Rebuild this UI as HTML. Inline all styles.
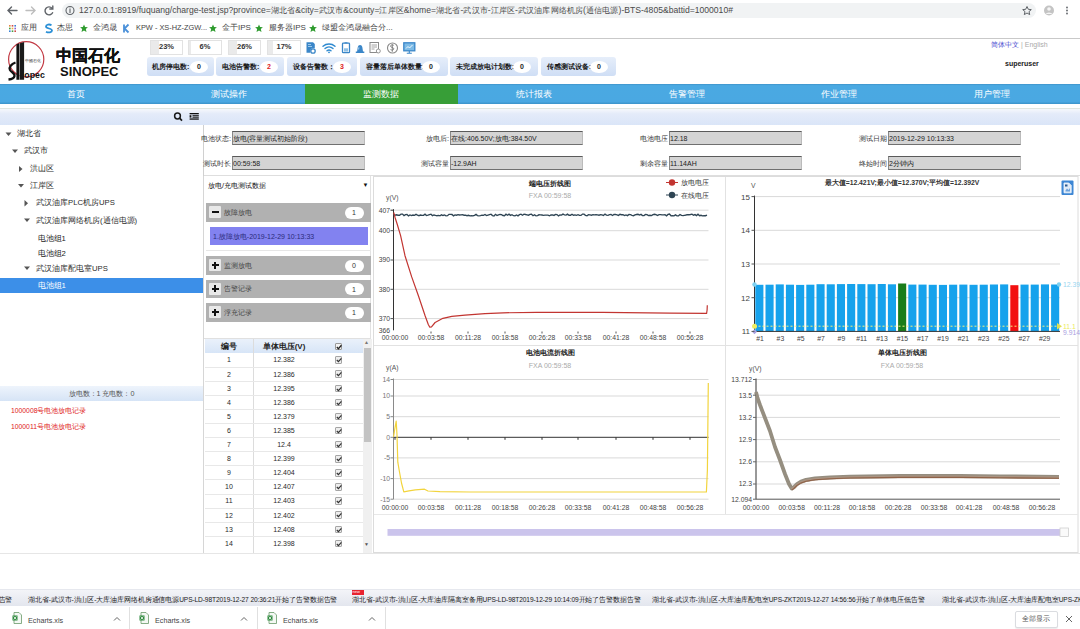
<!DOCTYPE html>
<html><head><meta charset="utf-8">
<style>
*{box-sizing:border-box;margin:0;padding:0}
html,body{width:1080px;height:629px;overflow:hidden;background:#fff;font-family:"Liberation Sans",sans-serif;color:#333}
.a{position:absolute;white-space:nowrap}
.t{position:absolute;white-space:nowrap;line-height:1}
</style></head><body>
<!-- ===== browser chrome ===== -->
<div class="a" style="left:0;top:0;width:1080px;height:38px;background:#fff"></div>
<div class="a" style="left:62px;top:3px;width:974px;height:15px;background:#f1f3f4;border-radius:8px"></div>
<div class="a" style="left:0;top:38px;width:1080px;height:1px;background:#c9c9c9"></div>
<div id="url" class="t" style="left:79px;top:6px;font-size:8.6px;color:#4a4a4a">127.0.0.1:8919/fuquang/charge-test.jsp?province=<span style="font-size:8px;letter-spacing:0.14px">湖北省</span>&amp;city=<span style="font-size:8px;letter-spacing:0.14px">武汉市</span>&amp;county=<span style="font-size:8px;letter-spacing:0.14px">江岸区</span>&amp;home=<span style="font-size:8px;letter-spacing:0.14px">湖北省</span>-<span style="font-size:8px;letter-spacing:0.14px">武汉市</span>-<span style="font-size:8px;letter-spacing:0.14px">江岸区</span>-<span style="font-size:8px;letter-spacing:0.14px">武汉油库网络机房</span>(<span style="font-size:8px;letter-spacing:0.14px">通信电源</span>)-BTS-4805&amp;battid=1000010#</div>

<!-- ===== header ===== -->
<div class="t" style="left:56px;top:48px;font-size:16px;font-weight:bold;color:#111;font-family:'Liberation Serif',serif;text-shadow:0.4px 0 0 #111,0 0.3px 0 #111">中国石化</div>
<div class="t" style="left:60px;top:64.5px;font-size:13px;font-weight:bold;color:#111">SINOPEC</div>


<!-- browser icons -->
<svg class="a" style="left:0;top:0" width="1080" height="38" viewBox="0 0 1080 38">
 <g stroke="#5f6368" stroke-width="1.4" fill="none" stroke-linecap="round">
  <path d="M8 10.5h9M11.5 7l-3.5 3.5 3.5 3.5"/>
  <path d="M26 10.5h9M31.5 7l3.5 3.5-3.5 3.5" stroke="#bdbdbd"/>
  <path d="M52 8.2a4 4 0 1 0 0.6 4.5"/><path d="M52.8 6v3h-3" />
  <circle cx="70" cy="10.5" r="4" stroke-width="1.1"/><path d="M70 9.5v3" stroke-width="1.1"/>
 </g>
 <circle cx="70" cy="8" r="0.6" fill="#5f6368"/>
 <path d="M1027 6.5l1.3 2.8 3 .3-2.3 2 .7 3-2.7-1.6-2.7 1.6.7-3-2.3-2 3-.3z" fill="none" stroke="#5f6368" stroke-width="1"/>
 <circle cx="1049" cy="10.5" r="5" fill="#c4c4c4"/><circle cx="1049" cy="9" r="1.8" fill="#f5f5f5"/><path d="M1045.5 14a4 3 0 0 1 7 0" fill="#f5f5f5"/>
 <g fill="#5f6368"><circle cx="1067" cy="7.5" r="0.9"/><circle cx="1067" cy="10.5" r="0.9"/><circle cx="1067" cy="13.5" r="0.9"/></g>
 <!-- bookmarks icons -->
 <g fill="#e8833a"><rect x="9" y="25" width="1.6" height="1.6"/><rect x="11.7" y="25" width="1.6" height="1.6" fill="#d04b4b"/><rect x="14.4" y="25" width="1.6" height="1.6" fill="#3b82d6"/>
 <rect x="9" y="27.7" width="1.6" height="1.6" fill="#46a046"/><rect x="11.7" y="27.7" width="1.6" height="1.6" fill="#e8b03a"/><rect x="14.4" y="27.7" width="1.6" height="1.6" fill="#8b5cd6"/>
 <rect x="9" y="30.4" width="1.6" height="1.6" fill="#3b82d6"/><rect x="11.7" y="30.4" width="1.6" height="1.6" fill="#46a046"/><rect x="14.4" y="30.4" width="1.6" height="1.6" fill="#d04b4b"/></g>
 <path d="M51.5 25.2c-2-1.2-5.5-.8-5.5 1.3 0 2.5 6 1.5 6 4 0 2-3.5 2.5-6 1.2" stroke="#2a8fd6" stroke-width="1.8" fill="none"/>
 <path d="M84 24.5l1.1 2.6 2.8.2-2.1 1.8.7 2.8-2.5-1.5-2.5 1.5.7-2.8-2.1-1.8 2.8-.2z" fill="#2e9b2e"/>
 <path d="M124 24.5v8M128.5 24.5l-4 4 4 4" stroke="#4a90d9" stroke-width="1.8" fill="none"/>
 <path d="M213 24.5l1.1 2.6 2.8.2-2.1 1.8.7 2.8-2.5-1.5-2.5 1.5.7-2.8-2.1-1.8 2.8-.2z" fill="#2e9b2e"/>
 <path d="M259 24.5l1.1 2.6 2.8.2-2.1 1.8.7 2.8-2.5-1.5-2.5 1.5.7-2.8-2.1-1.8 2.8-.2z" fill="#2e9b2e"/>
 <path d="M313 24.5l1.1 2.6 2.8.2-2.1 1.8.7 2.8-2.5-1.5-2.5 1.5.7-2.8-2.1-1.8 2.8-.2z" fill="#2e9b2e"/>
</svg>
<div class="t" style="left:21px;top:24px;font-size:8px;color:#444">应用</div>
<div class="t" style="left:57px;top:24px;font-size:8px;color:#444">杰思</div>
<div class="t" style="left:93px;top:24px;font-size:8px;color:#444">金鸿晟</div>
<div class="t" style="left:136px;top:24px;font-size:7.4px;color:#444">KPW - XS-HZ-ZGW...</div>
<div class="t" style="left:222px;top:24px;font-size:8px;color:#444">金干IPS</div>
<div class="t" style="left:269px;top:24px;font-size:8px;color:#444">服务器IPS</div>
<div class="t" style="left:322px;top:24px;font-size:8px;color:#444">绿盟金鸿晟融合分...</div>

<!-- logo -->
<svg class="a" style="left:0;top:38px" width="140" height="46" viewBox="0 38 140 46">
 <circle cx="26.2" cy="59.3" r="17.6" fill="none" stroke="#c23a44" stroke-width="1.2"/>
 <path d="M16.4 44.5l2.8-1.2v36.4h-2.8z" fill="#111"/>
 <path d="M19.8 43.3l4.3-1.2v37.6h-4.3z" fill="#1a1a1a"/>
 <rect x="19.2" y="44" width="0.6" height="35.7" fill="#777"/>
 <text x="24.5" y="61.5" font-size="4.2" fill="#333" font-family="Liberation Serif">中國石化</text>
 <path d="M15.5 62.5c-4 1.5-7 4.5-5.5 7.5 1.5 2.5 5 3 4.5 6-.4 2.2-3 3.2-6 3.5" stroke="#111" stroke-width="2.3" fill="none"/>
 <text x="24.3" y="78" font-size="9.5" font-weight="bold" fill="#111" font-family="Liberation Sans" textLength="20.5" lengthAdjust="spacingAndGlyphs">opec</text>
</svg>
<!-- progress boxes -->
<div class="a" style="left:150px;top:40px;width:33px;height:15px;border:1px solid #e2e2e2;background:linear-gradient(90deg,#eaeaea 0,#eaeaea 25%,#fff 25%)"></div>
<div class="a" style="left:188px;top:40px;width:34px;height:15px;border:1px solid #e2e2e2;background:linear-gradient(90deg,#eaeaea 0,#eaeaea 6%,#fff 6%)"></div>
<div class="a" style="left:228px;top:40px;width:33px;height:15px;border:1px solid #e2e2e2;background:linear-gradient(90deg,#eaeaea 0,#eaeaea 26%,#fff 26%)"></div>
<div class="a" style="left:267px;top:40px;width:34px;height:15px;border:1px solid #e2e2e2;background:linear-gradient(90deg,#eaeaea 0,#eaeaea 17%,#fff 17%)"></div>
<div class="t" style="left:150px;top:42.7px;width:33px;text-align:center;font-size:7.5px;font-weight:bold;color:#333">23%</div>
<div class="t" style="left:188px;top:42.7px;width:34px;text-align:center;font-size:7.5px;font-weight:bold;color:#333">6%</div>
<div class="t" style="left:228px;top:42.7px;width:33px;text-align:center;font-size:7.5px;font-weight:bold;color:#333">26%</div>
<div class="t" style="left:267px;top:42.7px;width:34px;text-align:center;font-size:7.5px;font-weight:bold;color:#333">17%</div>

<!-- header icons -->
<svg class="a" style="left:300px;top:38px" width="120" height="18" viewBox="300 38 120 18">
 <path d="M306.5 42.3h6.5l1.8 1.8v4.2h-1.5a3 3 0 0 0-3 3v1.4h-3.8z" fill="#3a86c8"/><rect x="308" y="44" width="3" height="1" fill="#9cc8ea"/><rect x="308" y="46" width="4" height="1" fill="#9cc8ea"/>
 <circle cx="313" cy="51" r="2.2" fill="none" stroke="#3a86c8" stroke-width="1.3"/>
 <g fill="none" stroke="#2f8ad0" stroke-width="1.4" stroke-linecap="round"><path d="M323 46.3a9 9 0 0 1 12 0"/><path d="M325 48.6a6 6 0 0 1 8 0"/><path d="M327 50.8a3 3 0 0 1 4 0"/></g><circle cx="329" cy="52.3" r="0.9" fill="#2f8ad0"/>
 <rect x="342.5" y="43.2" width="7" height="9.5" rx="0.8" fill="none" stroke="#3a86c8" stroke-width="1.3"/><rect x="344" y="48.3" width="4" height="3.3" fill="#8fc0e6"/><rect x="344.5" y="42.3" width="3" height="1" fill="#3a86c8"/>
 <path d="M355.8 53h8.5v-1.6h-1.3l-.7-4.5a2.3 2.3 0 0 0-4.5 0l-.7 4.5h-1.3z" fill="#3a86c8"/><path d="M358.6 49.5l.3-2.2" stroke="#cfe5f5" stroke-width="0.8"/>
 <rect x="370" y="42.5" width="8.5" height="10" fill="none" stroke="#8a8a8a" stroke-width="1"/><path d="M371.5 45h5.5M371.5 47h5.5M371.5 49h3" stroke="#8a8a8a" stroke-width="0.8"/><circle cx="378.3" cy="51" r="2" fill="#fff" stroke="#8a8a8a" stroke-width="0.9"/>
 <circle cx="392.5" cy="48" r="5" fill="none" stroke="#888" stroke-width="1.1"/><path d="M393.8 45.3c-1.5-.8-3.3-.3-3.3.9 0 1.4 3.3 1 3.3 2.6 0 1.3-1.9 1.6-3.3.8M392.3 44.2v7.6" stroke="#777" stroke-width="0.9" fill="none"/>
 <rect x="403.8" y="42.8" width="11" height="8" fill="#7dbbe6" stroke="#3a86c8" stroke-width="1.3"/><path d="M406 48.5l2-2 1.5 1.5 3-3" stroke="#fff" stroke-width="0.9" fill="none"/><path d="M406.8 53.3h5M409.3 51v2.3" stroke="#3a86c8" stroke-width="1.1"/>
</svg>
<!-- stat buttons -->
<div class="a" style="left:147px;top:57px;width:67px;height:19px;border-radius:3px;background:linear-gradient(#e6eefa,#cfdef5)"></div>
<div class="a" style="left:216px;top:57px;width:68px;height:19px;border-radius:3px;background:linear-gradient(#e6eefa,#cfdef5)"></div>
<div class="a" style="left:287px;top:57px;width:70px;height:19px;border-radius:3px;background:linear-gradient(#e6eefa,#cfdef5)"></div>
<div class="a" style="left:360px;top:57px;width:88px;height:19px;border-radius:3px;background:linear-gradient(#e6eefa,#cfdef5)"></div>
<div class="a" style="left:450px;top:57px;width:88px;height:19px;border-radius:3px;background:linear-gradient(#e6eefa,#cfdef5)"></div>
<div class="a" style="left:541px;top:57px;width:75px;height:19px;border-radius:3px;background:linear-gradient(#e6eefa,#cfdef5)"></div>
<div class="t" style="left:152px;top:62.5px;font-size:7px;font-weight:bold;color:#1a1a1a">机房停电数:</div>
<div class="t" style="left:222px;top:62.5px;font-size:7px;font-weight:bold;color:#1a1a1a">电池告警数:</div>
<div class="t" style="left:293px;top:62.5px;font-size:7px;font-weight:bold;color:#1a1a1a">设备告警数：</div>
<div class="t" style="left:366px;top:62.5px;font-size:7px;font-weight:bold;color:#1a1a1a">容量落后单体数量:</div>
<div class="t" style="left:456px;top:62.5px;font-size:7px;font-weight:bold;color:#1a1a1a">未完成放电计划数:</div>
<div class="t" style="left:547px;top:62.5px;font-size:7px;font-weight:bold;color:#1a1a1a">传感测试设备:</div>
<div class="a" style="left:190px;top:60.5px;width:18px;height:12.5px;border-radius:50%;background:#fff"></div>
<div class="a" style="left:260px;top:60.5px;width:18px;height:12.5px;border-radius:50%;background:#fff"></div>
<div class="a" style="left:333px;top:60.5px;width:18px;height:12.5px;border-radius:50%;background:#fff"></div>
<div class="a" style="left:422px;top:60.5px;width:18px;height:12.5px;border-radius:50%;background:#fff"></div>
<div class="a" style="left:513px;top:60.5px;width:18px;height:12.5px;border-radius:50%;background:#fff"></div>
<div class="a" style="left:590px;top:60.5px;width:18px;height:12.5px;border-radius:50%;background:#fff"></div>
<div class="t" style="left:190px;top:63px;width:18px;text-align:center;font-size:7px;font-weight:bold;color:#222">0</div>
<div class="t" style="left:260px;top:63px;width:18px;text-align:center;font-size:7px;font-weight:bold;color:#d22">2</div>
<div class="t" style="left:333px;top:63px;width:18px;text-align:center;font-size:7px;font-weight:bold;color:#d22">3</div>
<div class="t" style="left:422px;top:63px;width:18px;text-align:center;font-size:7px;font-weight:bold;color:#222">0</div>
<div class="t" style="left:513px;top:63px;width:18px;text-align:center;font-size:7px;font-weight:bold;color:#222">0</div>
<div class="t" style="left:590px;top:63px;width:18px;text-align:center;font-size:7px;font-weight:bold;color:#222">0</div>

<div class="t" style="left:991px;top:41px;font-size:7px;color:#4a4ad0">简体中文 <span style="color:#aaa">| English</span></div>
<div class="t" style="left:1005px;top:60px;font-size:7px;font-weight:bold;color:#222">superuser</div>

<!-- ===== nav ===== -->
<div class="a" style="left:0;top:84px;width:1080px;height:20px;background:linear-gradient(#3f93c9 0,#4aa9e2 8%,#4aa8e2 88%,#3b93c9 100%)"></div>
<div class="a" style="left:305px;top:84px;width:153px;height:20px;background:#379e37"></div>

<div class="t" style="left:0.0px;top:90px;width:152.6px;text-align:center;font-size:8.5px;color:#fff">首页</div>
<div class="t" style="left:152.6px;top:90px;width:152.6px;text-align:center;font-size:8.5px;color:#fff">测试操作</div>
<div class="t" style="left:305.2px;top:90px;width:152.6px;text-align:center;font-size:8.5px;color:#fff">监测数据</div>
<div class="t" style="left:457.8px;top:90px;width:152.6px;text-align:center;font-size:8.5px;color:#fff">统计报表</div>
<div class="t" style="left:610.4px;top:90px;width:152.6px;text-align:center;font-size:8.5px;color:#fff">告警管理</div>
<div class="t" style="left:763.0px;top:90px;width:152.6px;text-align:center;font-size:8.5px;color:#fff">作业管理</div>
<div class="t" style="left:915.6px;top:90px;width:152.6px;text-align:center;font-size:8.5px;color:#fff">用户管理</div>

<!-- toolbar strip -->
<div class="a" style="left:0;top:108px;width:1080px;height:17px;background:linear-gradient(#f6f8fc 0,#e4ebf9 30%,#dae5f8 100%);border-top:1px solid #e0e6e0"></div>

<!-- left panel -->
<div class="a" style="left:203px;top:125px;width:1px;height:428px;background:#d0d0d0"></div>
<div class="a" style="left:0;top:553px;width:1080px;height:1px;background:#e6e6e6"></div>


<!-- toolbar icons -->
<svg class="a" style="left:170px;top:108px" width="34" height="17" viewBox="170 108 34 17">
 <circle cx="177.5" cy="116" r="2.9" fill="none" stroke="#1a1a1a" stroke-width="1.5"/><path d="M179.6 118.2l2.4 2.4" stroke="#1a1a1a" stroke-width="1.7"/>
 <rect x="189.6" y="113" width="9.2" height="1.3" fill="#111"/><rect x="189.6" y="118.4" width="9.2" height="1.3" fill="#111"/>
 <rect x="189.6" y="115.2" width="1.8" height="2.4" fill="#111"/><rect x="192.5" y="115.2" width="6.3" height="1" fill="#111"/><rect x="192.5" y="116.7" width="6.3" height="1" fill="#111"/>
</svg>
<!-- tree -->
<svg class="a" style="left:0;top:125px" width="40" height="170" viewBox="0 125 40 170">
 <g fill="#555">
  <path d="M5.5 132.5h6l-3 3.5z"/>
  <path d="M12 149.5h6l-3 3.5z"/>
  <path d="M19 166v6l3.5-3z"/>
  <path d="M18 184h6l-3 3.5z"/>
  <path d="M24.5 200v6.5l3.5-3.2z"/>
  <path d="M24 218.5h6l-3 3.5z"/>
  <path d="M24 266.5h6l-3 3.5z"/>
 </g>
</svg>
<div class="t" style="left:17px;top:130px;font-size:7.7px;color:#2a2a2a">湖北省</div>
<div class="t" style="left:24px;top:147px;font-size:7.7px;color:#2a2a2a">武汉市</div>
<div class="t" style="left:30px;top:165px;font-size:7.7px;color:#2a2a2a">洪山区</div>
<div class="t" style="left:30px;top:182px;font-size:7.7px;color:#2a2a2a">江岸区</div>
<div class="t" style="left:36px;top:199px;font-size:7.7px;color:#2a2a2a">武汉油库PLC机房UPS</div>
<div class="t" style="left:36px;top:217px;font-size:7.7px;color:#2a2a2a">武汉油库网络机房(通信电源)</div>
<div class="t" style="left:37.5px;top:235px;font-size:7.7px;color:#222">电池组1</div>
<div class="t" style="left:37.5px;top:250px;font-size:7.7px;color:#222">电池组2</div>
<div class="t" style="left:36px;top:265px;font-size:7.7px;color:#2a2a2a">武汉油库配电室UPS</div>
<div class="a" style="left:0;top:278px;width:203px;height:15px;background:#3c8fe8"></div>
<div class="t" style="left:37.5px;top:282px;font-size:7.7px;color:#fff">电池组1</div>

<div class="a" style="left:0;top:386px;width:203px;height:15px;background:linear-gradient(#eef4fc,#d6e4f6)"></div>
<div class="t" style="left:0;top:390px;width:203px;text-align:center;font-size:7.2px;color:#555">放电数：1 充电数：0</div>
<div class="t" style="left:11px;top:407.5px;font-size:6.8px;color:#e02020">1000008号电池放电记录</div>
<div class="t" style="left:11px;top:423.5px;font-size:6.8px;color:#e02020">1000011号电池放电记录</div>

<!-- right content -->
<div class="a" style="left:204px;top:175px;width:876px;height:1px;background:#dedede"></div>

<!-- info fields -->
<div class="a" style="left:232px;top:131px;width:133px;height:14px;background:#d4d4d4;border-top:1.5px solid #5a5a5a;border-bottom:1.5px solid #707070;border-left:1px solid #888;border-right:1px solid #bbb"></div>
<div class="t" style="left:233px;top:134.5px;font-size:7px;color:#222">放电(容量测试初始阶段)</div>
<div class="t" style="left:152px;top:134.5px;width:79px;text-align:right;font-size:7.3px;color:#333">电池状态:</div>
<div class="a" style="left:450px;top:131px;width:133px;height:14px;background:#d4d4d4;border-top:1.5px solid #5a5a5a;border-bottom:1.5px solid #707070;border-left:1px solid #888;border-right:1px solid #bbb"></div>
<div class="t" style="left:451px;top:134.5px;font-size:7px;color:#222">在线:406.50V;放电:384.50V</div>
<div class="t" style="left:370px;top:134.5px;width:79px;text-align:right;font-size:7.3px;color:#333">放电后:</div>
<div class="a" style="left:669px;top:131px;width:133px;height:14px;background:#d4d4d4;border-top:1.5px solid #5a5a5a;border-bottom:1.5px solid #707070;border-left:1px solid #888;border-right:1px solid #bbb"></div>
<div class="t" style="left:670px;top:134.5px;font-size:7px;color:#222">12.18</div>
<div class="t" style="left:589px;top:134.5px;width:79px;text-align:right;font-size:7.3px;color:#333">电池电压</div>
<div class="a" style="left:888px;top:131px;width:133px;height:14px;background:#d4d4d4;border-top:1.5px solid #5a5a5a;border-bottom:1.5px solid #707070;border-left:1px solid #888;border-right:1px solid #bbb"></div>
<div class="t" style="left:889px;top:134.5px;font-size:7px;color:#222">2019-12-29 10:13:33</div>
<div class="t" style="left:808px;top:134.5px;width:79px;text-align:right;font-size:7.3px;color:#333">测试日期</div>
<div class="a" style="left:232px;top:156px;width:133px;height:14px;background:#d4d4d4;border-top:1.5px solid #5a5a5a;border-bottom:1.5px solid #707070;border-left:1px solid #888;border-right:1px solid #bbb"></div>
<div class="t" style="left:233px;top:159.5px;font-size:7px;color:#222">00:59:58</div>
<div class="t" style="left:152px;top:159.5px;width:79px;text-align:right;font-size:7.3px;color:#333">测试时长</div>
<div class="a" style="left:450px;top:156px;width:133px;height:14px;background:#d4d4d4;border-top:1.5px solid #5a5a5a;border-bottom:1.5px solid #707070;border-left:1px solid #888;border-right:1px solid #bbb"></div>
<div class="t" style="left:451px;top:159.5px;font-size:7px;color:#222">-12.9AH</div>
<div class="t" style="left:370px;top:159.5px;width:79px;text-align:right;font-size:7.3px;color:#333">测试容量</div>
<div class="a" style="left:669px;top:156px;width:133px;height:14px;background:#d4d4d4;border-top:1.5px solid #5a5a5a;border-bottom:1.5px solid #707070;border-left:1px solid #888;border-right:1px solid #bbb"></div>
<div class="t" style="left:670px;top:159.5px;font-size:7px;color:#222">11.14AH</div>
<div class="t" style="left:589px;top:159.5px;width:79px;text-align:right;font-size:7.3px;color:#333">剩余容量</div>
<div class="a" style="left:888px;top:156px;width:133px;height:14px;background:#d4d4d4;border-top:1.5px solid #5a5a5a;border-bottom:1.5px solid #707070;border-left:1px solid #888;border-right:1px solid #bbb"></div>
<div class="t" style="left:889px;top:159.5px;font-size:7px;color:#222">2分钟内</div>
<div class="t" style="left:808px;top:159.5px;width:79px;text-align:right;font-size:7.3px;color:#333">终始时间</div>

<!-- select panel -->
<div class="a" style="left:203px;top:176px;width:1px;height:377px;background:#d6d6d6"></div>
<div class="a" style="left:370px;top:176px;width:1px;height:163px;background:#e2e2e2"></div>
<div class="t" style="left:208px;top:181.5px;font-size:7.2px;color:#111">放电/充电测试数据</div>
<div class="t" style="left:362.5px;top:182px;font-size:6px;color:#111">▼</div>
<div class="a" style="left:206px;top:203px;width:164.6px;height:18.5px;background:#b1b1b1"></div>
<div class="a" style="left:209px;top:206px;width:12px;height:12px;background:#e8e8e8;border-radius:1px"></div>
<div class="a" style="left:211.5px;top:211.3px;width:7px;height:1.6px;background:#111"></div>
<div class="t" style="left:224px;top:208.5px;font-size:7px;color:#444">故障放电</div>
<div class="a" style="left:344.5px;top:206.5px;width:19px;height:12px;border-radius:6px;background:#fff"></div>
<div class="t" style="left:344.5px;top:209px;width:19px;text-align:center;font-size:7px;color:#333">1</div>
<div class="a" style="left:206px;top:250px;width:164.6px;height:1px;background:#e6e6e6"></div>
<div class="a" style="left:209.5px;top:227px;width:158px;height:18px;background:#8282f0"></div>
<div class="t" style="left:213px;top:232.5px;font-size:7px;color:#2b2b7a">1.故障放电-2019-12-29 10:13:33</div>
<div class="a" style="left:206px;top:256px;width:164.6px;height:18.5px;background:#b1b1b1"></div>
<div class="a" style="left:209px;top:259px;width:12px;height:12px;background:#e8e8e8;border-radius:1px"></div>
<div class="a" style="left:211.5px;top:264.3px;width:7px;height:1.8px;background:#111"></div>
<div class="a" style="left:214.1px;top:261.7px;width:1.8px;height:7px;background:#111"></div>
<div class="t" style="left:224px;top:261.5px;font-size:7px;color:#444">监测放电</div>
<div class="a" style="left:344.5px;top:259.5px;width:19px;height:12px;border-radius:6px;background:#fff"></div>
<div class="t" style="left:344.5px;top:262px;width:19px;text-align:center;font-size:7px;color:#333">0</div>
<div class="a" style="left:206px;top:279.5px;width:164.6px;height:18.5px;background:#b1b1b1"></div>
<div class="a" style="left:209px;top:282.5px;width:12px;height:12px;background:#e8e8e8;border-radius:1px"></div>
<div class="a" style="left:211.5px;top:287.8px;width:7px;height:1.8px;background:#111"></div>
<div class="a" style="left:214.1px;top:285.2px;width:1.8px;height:7px;background:#111"></div>
<div class="t" style="left:224px;top:285.0px;font-size:7px;color:#444">告警记录</div>
<div class="a" style="left:344.5px;top:283.0px;width:19px;height:12px;border-radius:6px;background:#fff"></div>
<div class="t" style="left:344.5px;top:285.5px;width:19px;text-align:center;font-size:7px;color:#333">1</div>
<div class="a" style="left:206px;top:303px;width:164.6px;height:18.5px;background:#b1b1b1"></div>
<div class="a" style="left:209px;top:306px;width:12px;height:12px;background:#e8e8e8;border-radius:1px"></div>
<div class="a" style="left:211.5px;top:311.3px;width:7px;height:1.8px;background:#111"></div>
<div class="a" style="left:214.1px;top:308.7px;width:1.8px;height:7px;background:#111"></div>
<div class="t" style="left:224px;top:308.5px;font-size:7px;color:#444">浮充记录</div>
<div class="a" style="left:344.5px;top:306.5px;width:19px;height:12px;border-radius:6px;background:#fff"></div>
<div class="t" style="left:344.5px;top:309px;width:19px;text-align:center;font-size:7px;color:#333">1</div>
<div class="a" style="left:204px;top:338px;width:167px;height:1px;background:#e0e0e0"></div>
<div class="a" style="left:205px;top:338.5px;width:158px;height:14.5px;background:linear-gradient(#eaf1fb,#d7e5f7)"></div>
<div class="t" style="left:205px;top:342.5px;width:48px;text-align:center;font-size:8px;font-weight:bold;color:#222">编号</div>
<div class="t" style="left:253px;top:342.5px;width:62px;text-align:center;font-size:8px;font-weight:bold;color:#222">单体电压(V)</div>
<div class="a" style="left:253px;top:339px;width:1px;height:214px;background:#dcdcdc"></div>
<div class="a" style="left:362.5px;top:339px;width:9px;height:214px;background:#f0f0f0"></div>
<div class="a" style="left:363.5px;top:347.5px;width:7px;height:94px;background:#c3c3c3"></div>
<div class="t" style="left:364px;top:340px;font-size:5px;color:#777">▲</div>
<div class="t" style="left:364px;top:542px;font-size:5px;color:#555">▼</div>
<div class="a" style="left:205px;top:366.60px;width:158px;height:1px;background:#e8e8e8"></div>
<div class="t" style="left:205px;top:356.45px;width:48px;text-align:center;font-size:7px;color:#2a2a2a">1</div>
<div class="t" style="left:253px;top:356.45px;width:62px;text-align:center;font-size:7px;color:#2a2a2a">12.382</div>
<div class="a" style="left:334.5px;top:356.30px;width:7.5px;height:7.5px;border:1px solid #a5a5a5;background:#eee;border-radius:1px"></div>
<svg class="a" style="left:334.5px;top:356.30px" width="8" height="8" viewBox="0 0 8 8"><path d="M1.8 4l1.6 1.7 3-3.4" stroke="#333" stroke-width="1.2" fill="none"/></svg>
<div class="a" style="left:205px;top:380.70px;width:158px;height:1px;background:#e8e8e8"></div>
<div class="t" style="left:205px;top:370.55px;width:48px;text-align:center;font-size:7px;color:#2a2a2a">2</div>
<div class="t" style="left:253px;top:370.55px;width:62px;text-align:center;font-size:7px;color:#2a2a2a">12.386</div>
<div class="a" style="left:334.5px;top:370.40px;width:7.5px;height:7.5px;border:1px solid #a5a5a5;background:#eee;border-radius:1px"></div>
<svg class="a" style="left:334.5px;top:370.40px" width="8" height="8" viewBox="0 0 8 8"><path d="M1.8 4l1.6 1.7 3-3.4" stroke="#333" stroke-width="1.2" fill="none"/></svg>
<div class="a" style="left:205px;top:394.80px;width:158px;height:1px;background:#e8e8e8"></div>
<div class="t" style="left:205px;top:384.65px;width:48px;text-align:center;font-size:7px;color:#2a2a2a">3</div>
<div class="t" style="left:253px;top:384.65px;width:62px;text-align:center;font-size:7px;color:#2a2a2a">12.395</div>
<div class="a" style="left:334.5px;top:384.50px;width:7.5px;height:7.5px;border:1px solid #a5a5a5;background:#eee;border-radius:1px"></div>
<svg class="a" style="left:334.5px;top:384.50px" width="8" height="8" viewBox="0 0 8 8"><path d="M1.8 4l1.6 1.7 3-3.4" stroke="#333" stroke-width="1.2" fill="none"/></svg>
<div class="a" style="left:205px;top:408.90px;width:158px;height:1px;background:#e8e8e8"></div>
<div class="t" style="left:205px;top:398.75px;width:48px;text-align:center;font-size:7px;color:#2a2a2a">4</div>
<div class="t" style="left:253px;top:398.75px;width:62px;text-align:center;font-size:7px;color:#2a2a2a">12.386</div>
<div class="a" style="left:334.5px;top:398.60px;width:7.5px;height:7.5px;border:1px solid #a5a5a5;background:#eee;border-radius:1px"></div>
<svg class="a" style="left:334.5px;top:398.60px" width="8" height="8" viewBox="0 0 8 8"><path d="M1.8 4l1.6 1.7 3-3.4" stroke="#333" stroke-width="1.2" fill="none"/></svg>
<div class="a" style="left:205px;top:423.00px;width:158px;height:1px;background:#e8e8e8"></div>
<div class="t" style="left:205px;top:412.85px;width:48px;text-align:center;font-size:7px;color:#2a2a2a">5</div>
<div class="t" style="left:253px;top:412.85px;width:62px;text-align:center;font-size:7px;color:#2a2a2a">12.379</div>
<div class="a" style="left:334.5px;top:412.70px;width:7.5px;height:7.5px;border:1px solid #a5a5a5;background:#eee;border-radius:1px"></div>
<svg class="a" style="left:334.5px;top:412.70px" width="8" height="8" viewBox="0 0 8 8"><path d="M1.8 4l1.6 1.7 3-3.4" stroke="#333" stroke-width="1.2" fill="none"/></svg>
<div class="a" style="left:205px;top:437.10px;width:158px;height:1px;background:#e8e8e8"></div>
<div class="t" style="left:205px;top:426.95px;width:48px;text-align:center;font-size:7px;color:#2a2a2a">6</div>
<div class="t" style="left:253px;top:426.95px;width:62px;text-align:center;font-size:7px;color:#2a2a2a">12.385</div>
<div class="a" style="left:334.5px;top:426.80px;width:7.5px;height:7.5px;border:1px solid #a5a5a5;background:#eee;border-radius:1px"></div>
<svg class="a" style="left:334.5px;top:426.80px" width="8" height="8" viewBox="0 0 8 8"><path d="M1.8 4l1.6 1.7 3-3.4" stroke="#333" stroke-width="1.2" fill="none"/></svg>
<div class="a" style="left:205px;top:451.20px;width:158px;height:1px;background:#e8e8e8"></div>
<div class="t" style="left:205px;top:441.05px;width:48px;text-align:center;font-size:7px;color:#2a2a2a">7</div>
<div class="t" style="left:253px;top:441.05px;width:62px;text-align:center;font-size:7px;color:#2a2a2a">12.4</div>
<div class="a" style="left:334.5px;top:440.90px;width:7.5px;height:7.5px;border:1px solid #a5a5a5;background:#eee;border-radius:1px"></div>
<svg class="a" style="left:334.5px;top:440.90px" width="8" height="8" viewBox="0 0 8 8"><path d="M1.8 4l1.6 1.7 3-3.4" stroke="#333" stroke-width="1.2" fill="none"/></svg>
<div class="a" style="left:205px;top:465.30px;width:158px;height:1px;background:#e8e8e8"></div>
<div class="t" style="left:205px;top:455.15px;width:48px;text-align:center;font-size:7px;color:#2a2a2a">8</div>
<div class="t" style="left:253px;top:455.15px;width:62px;text-align:center;font-size:7px;color:#2a2a2a">12.399</div>
<div class="a" style="left:334.5px;top:455.00px;width:7.5px;height:7.5px;border:1px solid #a5a5a5;background:#eee;border-radius:1px"></div>
<svg class="a" style="left:334.5px;top:455.00px" width="8" height="8" viewBox="0 0 8 8"><path d="M1.8 4l1.6 1.7 3-3.4" stroke="#333" stroke-width="1.2" fill="none"/></svg>
<div class="a" style="left:205px;top:479.40px;width:158px;height:1px;background:#e8e8e8"></div>
<div class="t" style="left:205px;top:469.25px;width:48px;text-align:center;font-size:7px;color:#2a2a2a">9</div>
<div class="t" style="left:253px;top:469.25px;width:62px;text-align:center;font-size:7px;color:#2a2a2a">12.404</div>
<div class="a" style="left:334.5px;top:469.10px;width:7.5px;height:7.5px;border:1px solid #a5a5a5;background:#eee;border-radius:1px"></div>
<svg class="a" style="left:334.5px;top:469.10px" width="8" height="8" viewBox="0 0 8 8"><path d="M1.8 4l1.6 1.7 3-3.4" stroke="#333" stroke-width="1.2" fill="none"/></svg>
<div class="a" style="left:205px;top:493.50px;width:158px;height:1px;background:#e8e8e8"></div>
<div class="t" style="left:205px;top:483.35px;width:48px;text-align:center;font-size:7px;color:#2a2a2a">10</div>
<div class="t" style="left:253px;top:483.35px;width:62px;text-align:center;font-size:7px;color:#2a2a2a">12.407</div>
<div class="a" style="left:334.5px;top:483.20px;width:7.5px;height:7.5px;border:1px solid #a5a5a5;background:#eee;border-radius:1px"></div>
<svg class="a" style="left:334.5px;top:483.20px" width="8" height="8" viewBox="0 0 8 8"><path d="M1.8 4l1.6 1.7 3-3.4" stroke="#333" stroke-width="1.2" fill="none"/></svg>
<div class="a" style="left:205px;top:507.60px;width:158px;height:1px;background:#e8e8e8"></div>
<div class="t" style="left:205px;top:497.45px;width:48px;text-align:center;font-size:7px;color:#2a2a2a">11</div>
<div class="t" style="left:253px;top:497.45px;width:62px;text-align:center;font-size:7px;color:#2a2a2a">12.403</div>
<div class="a" style="left:334.5px;top:497.30px;width:7.5px;height:7.5px;border:1px solid #a5a5a5;background:#eee;border-radius:1px"></div>
<svg class="a" style="left:334.5px;top:497.30px" width="8" height="8" viewBox="0 0 8 8"><path d="M1.8 4l1.6 1.7 3-3.4" stroke="#333" stroke-width="1.2" fill="none"/></svg>
<div class="a" style="left:205px;top:521.70px;width:158px;height:1px;background:#e8e8e8"></div>
<div class="t" style="left:205px;top:511.55px;width:48px;text-align:center;font-size:7px;color:#2a2a2a">12</div>
<div class="t" style="left:253px;top:511.55px;width:62px;text-align:center;font-size:7px;color:#2a2a2a">12.402</div>
<div class="a" style="left:334.5px;top:511.40px;width:7.5px;height:7.5px;border:1px solid #a5a5a5;background:#eee;border-radius:1px"></div>
<svg class="a" style="left:334.5px;top:511.40px" width="8" height="8" viewBox="0 0 8 8"><path d="M1.8 4l1.6 1.7 3-3.4" stroke="#333" stroke-width="1.2" fill="none"/></svg>
<div class="a" style="left:205px;top:535.80px;width:158px;height:1px;background:#e8e8e8"></div>
<div class="t" style="left:205px;top:525.65px;width:48px;text-align:center;font-size:7px;color:#2a2a2a">13</div>
<div class="t" style="left:253px;top:525.65px;width:62px;text-align:center;font-size:7px;color:#2a2a2a">12.408</div>
<div class="a" style="left:334.5px;top:525.50px;width:7.5px;height:7.5px;border:1px solid #a5a5a5;background:#eee;border-radius:1px"></div>
<svg class="a" style="left:334.5px;top:525.50px" width="8" height="8" viewBox="0 0 8 8"><path d="M1.8 4l1.6 1.7 3-3.4" stroke="#333" stroke-width="1.2" fill="none"/></svg>
<div class="t" style="left:205px;top:539.75px;width:48px;text-align:center;font-size:7px;color:#2a2a2a">14</div>
<div class="t" style="left:253px;top:539.75px;width:62px;text-align:center;font-size:7px;color:#2a2a2a">12.398</div>
<div class="a" style="left:334.5px;top:539.60px;width:7.5px;height:7.5px;border:1px solid #a5a5a5;background:#eee;border-radius:1px"></div>
<svg class="a" style="left:334.5px;top:539.60px" width="8" height="8" viewBox="0 0 8 8"><path d="M1.8 4l1.6 1.7 3-3.4" stroke="#333" stroke-width="1.2" fill="none"/></svg>
<div class="a" style="left:334.5px;top:342.5px;width:7.5px;height:7.5px;border:1px solid #9a9a9a;background:#f4f4f4;border-radius:1px"></div>
<svg class="a" style="left:334.5px;top:342.5px" width="8" height="8" viewBox="0 0 8 8"><path d="M1.8 4l1.6 1.7 3-3.4" stroke="#222" stroke-width="1.3" fill="none"/></svg>

<svg class="a" style="left:0;top:0" width="1080" height="629" viewBox="0 0 1080 629" font-family="Liberation Sans">
<rect x="373.5" y="176.5" width="704.5" height="376" fill="none" stroke="#dcdcdc" stroke-width="1"/>
<line x1="725.5" y1="177" x2="725.5" y2="515" stroke="#e2e2e2"/>
<line x1="374" y1="345.5" x2="1078" y2="345.5" stroke="#e2e2e2"/>
<line x1="374" y1="514.5" x2="1078" y2="514.5" stroke="#e8e8e8"/>
<text x="550" y="185.5" font-size="7" fill="#222" text-anchor="middle" font-weight="bold">端电压折线图</text>
<text x="550" y="198" font-size="7" fill="#aaa" text-anchor="middle">FXA 00:59:58</text>
<text x="386" y="200" font-size="6.8" fill="#555">y(V)</text>
<line x1="666" y1="182.5" x2="678" y2="182.5" stroke="#c23531" stroke-width="1"/><circle cx="672" cy="182.5" r="3.2" fill="#c23531"/>
<text x="681" y="185" font-size="7" fill="#333">放电电压</text>
<line x1="666" y1="195" x2="678" y2="195" stroke="#2f4554" stroke-width="1"/><circle cx="672" cy="195" r="3.2" fill="#2f4554"/>
<text x="681" y="197.5" font-size="7" fill="#333">在线电压</text>
<line x1="393.5" y1="210.2" x2="708.5" y2="210.2" stroke="#d9d9d9" stroke-width="1"/>
<text x="390" y="212.5" font-size="6.8" fill="#444" text-anchor="end">407</text>
<line x1="393.5" y1="230.7" x2="708.5" y2="230.7" stroke="#d9d9d9" stroke-width="1"/>
<text x="390" y="233.0" font-size="6.8" fill="#444" text-anchor="end">400</text>
<line x1="393.5" y1="260.0" x2="708.5" y2="260.0" stroke="#d9d9d9" stroke-width="1"/>
<text x="390" y="262.3" font-size="6.8" fill="#444" text-anchor="end">390</text>
<line x1="393.5" y1="289.3" x2="708.5" y2="289.3" stroke="#d9d9d9" stroke-width="1"/>
<text x="390" y="291.6" font-size="6.8" fill="#444" text-anchor="end">380</text>
<line x1="393.5" y1="318.6" x2="708.5" y2="318.6" stroke="#d9d9d9" stroke-width="1"/>
<text x="390" y="320.9" font-size="6.8" fill="#444" text-anchor="end">370</text>
<text x="390" y="332.6" font-size="6.8" fill="#444" text-anchor="end">366</text>
<line x1="393.5" y1="209.2" x2="393.5" y2="330.3" stroke="#333" stroke-width="1"/>
<line x1="390.5" y1="210.2" x2="393.5" y2="210.2" stroke="#333" stroke-width="1"/>
<line x1="431" y1="331.5" x2="431" y2="333.5" stroke="#555"/><line x1="468" y1="331.5" x2="468" y2="333.5" stroke="#555"/><line x1="505" y1="331.5" x2="505" y2="333.5" stroke="#555"/><line x1="542" y1="331.5" x2="542" y2="333.5" stroke="#555"/><line x1="578" y1="331.5" x2="578" y2="333.5" stroke="#555"/><line x1="616" y1="331.5" x2="616" y2="333.5" stroke="#555"/><line x1="653" y1="331.5" x2="653" y2="333.5" stroke="#555"/><line x1="690" y1="331.5" x2="690" y2="333.5" stroke="#555"/><text x="395" y="339.5" font-size="6.8" fill="#444" text-anchor="middle">00:00:00</text>
<text x="431" y="339.5" font-size="6.8" fill="#444" text-anchor="middle">00:03:58</text>
<text x="468" y="339.5" font-size="6.8" fill="#444" text-anchor="middle">00:11:28</text>
<text x="505" y="339.5" font-size="6.8" fill="#444" text-anchor="middle">00:18:58</text>
<text x="542" y="339.5" font-size="6.8" fill="#444" text-anchor="middle">00:26:28</text>
<text x="578" y="339.5" font-size="6.8" fill="#444" text-anchor="middle">00:33:58</text>
<text x="616" y="339.5" font-size="6.8" fill="#444" text-anchor="middle">00:41:28</text>
<text x="653" y="339.5" font-size="6.8" fill="#444" text-anchor="middle">00:48:58</text>
<text x="690" y="339.5" font-size="6.8" fill="#444" text-anchor="middle">00:56:28</text>
<polyline points="393.5,214.5 395.0,215.1 396.5,214.8 398.0,215.2 399.5,215.2 401.0,214.2 402.5,214.1 404.0,215.6 405.5,214.6 407.0,214.5 408.5,215.9 410.0,214.9 411.5,215.6 413.0,215.0 414.5,215.3 416.0,214.4 417.5,215.2 419.0,215.7 420.5,215.0 422.0,215.4 423.5,215.3 425.0,214.2 426.5,215.5 428.0,215.2 429.5,214.6 431.0,214.2 432.5,215.7 434.0,215.0 435.5,215.4 437.0,215.7 438.5,215.4 440.0,215.8 441.5,214.8 443.0,215.5 444.5,214.9 446.0,215.8 447.5,215.7 449.0,214.3 450.5,214.3 452.0,214.5 453.5,215.8 455.0,214.9 456.5,215.2 458.0,214.6 459.5,215.0 461.0,214.8 462.5,214.7 464.0,215.2 465.5,215.2 467.0,215.7 468.5,215.3 470.0,215.8 471.5,215.6 473.0,215.9 474.5,215.3 476.0,214.4 477.5,215.6 479.0,215.8 480.5,215.7 482.0,215.1 483.5,215.4 485.0,214.5 486.5,215.6 488.0,215.1 489.5,214.6 491.0,214.2 492.5,215.6 494.0,215.9 495.5,214.3 497.0,215.5 498.5,214.8 500.0,214.4 501.5,214.6 503.0,215.5 504.5,215.7 506.0,214.2 507.5,215.2 509.0,214.2 510.5,215.4 512.0,214.7 513.5,215.7 515.0,215.9 516.5,215.0 518.0,215.9 519.5,214.7 521.0,214.2 522.5,215.2 524.0,214.2 525.5,214.5 527.0,214.8 528.5,215.2 530.0,214.4 531.5,214.2 533.0,215.7 534.5,214.7 536.0,215.8 537.5,215.7 539.0,214.8 540.5,214.9 542.0,215.0 543.5,215.3 545.0,215.2 546.5,215.1 548.0,215.2 549.5,215.8 551.0,215.0 552.5,214.9 554.0,215.4 555.5,214.5 557.0,214.6 558.5,215.9 560.0,215.0 561.5,215.1 563.0,214.1 564.5,214.8 566.0,215.1 567.5,214.1 569.0,215.2 570.5,215.2 572.0,214.2 573.5,215.2 575.0,214.9 576.5,215.3 578.0,214.7 579.5,215.4 581.0,215.4 582.5,214.1 584.0,214.2 585.5,215.3 587.0,215.8 588.5,214.6 590.0,214.9 591.5,215.2 593.0,214.7 594.5,214.8 596.0,214.7 597.5,214.8 599.0,215.2 600.5,214.6 602.0,214.8 603.5,215.5 605.0,214.1 606.5,215.1 608.0,215.4 609.5,214.7 611.0,214.5 612.5,215.5 614.0,214.5 615.5,214.4 617.0,214.9 618.5,215.4 620.0,214.3 621.5,214.7 623.0,214.7 624.5,215.6 626.0,214.9 627.5,215.6 629.0,214.4 630.5,214.7 632.0,215.3 633.5,215.7 635.0,214.9 636.5,214.5 638.0,214.3 639.5,215.1 641.0,214.4 642.5,215.6 644.0,215.6 645.5,214.4 647.0,214.6 648.5,215.6 650.0,215.3 651.5,215.6 653.0,214.7 654.5,214.3 656.0,214.6 657.5,215.5 659.0,214.6 660.5,214.7 662.0,214.9 663.5,214.9 665.0,214.8 666.5,215.8 668.0,214.4 669.5,214.1 671.0,215.8 672.5,215.7 674.0,215.9 675.5,214.9 677.0,215.8 678.5,215.8 680.0,214.5 681.5,215.4 683.0,215.6 684.5,215.3 686.0,215.0 687.5,214.6 689.0,214.7 690.5,214.5 692.0,214.2 693.5,215.2 695.0,214.6 696.5,215.6 698.0,214.2 699.5,215.7 701.0,215.3 702.5,215.8 704.0,215.7 705.5,215.7 707.0,215.1" fill="none" stroke="#2f4554" stroke-width="1.35"/>
<polyline points="393.7,212.5 395.2,218 397.3,224.5 400.6,235.6 405,255.7 411.7,276.9 418.4,295.8 425.1,315.8 428.3,324.5 429.8,327.2 431.5,326.8 435.1,322.5 442.9,318.3 451.8,316.3 465,315.2 485,313.6 503,312.8 536.7,312.3 603,312.4 670,313.1 706.6,313.4 707.1,310 707.3,305.3" fill="none" stroke="#c23531" stroke-width="1.2" stroke-linejoin="round"/>
<text x="902" y="185" font-size="6.8" fill="#333" text-anchor="middle" font-weight="bold">最大值=12.421V;最小值=12.370V;平均值=12.392V</text>
<text x="751" y="188" font-size="6.8" fill="#555">V</text>
<line x1="754.5" y1="196.6" x2="1060" y2="196.6" stroke="#d9d9d9"/>
<text x="750" y="199.6" font-size="8" fill="#444" text-anchor="end">15</text>
<line x1="754.5" y1="230.3" x2="1060" y2="230.3" stroke="#d9d9d9"/>
<text x="750" y="233.3" font-size="8" fill="#444" text-anchor="end">14</text>
<line x1="754.5" y1="264.0" x2="1060" y2="264.0" stroke="#d9d9d9"/>
<text x="750" y="267.0" font-size="8" fill="#444" text-anchor="end">13</text>
<line x1="754.5" y1="297.7" x2="1060" y2="297.7" stroke="#d9d9d9"/>
<text x="750" y="300.7" font-size="8" fill="#444" text-anchor="end">12</text>
<text x="750" y="334.4" font-size="8" fill="#444" text-anchor="end">11</text>
<line x1="754.5" y1="195.6" x2="754.5" y2="331.4" stroke="#333"/>
<rect x="755.30" y="284.8" width="8.1" height="46.6" fill="#16a2ec"/>
<rect x="765.50" y="284.7" width="8.1" height="46.7" fill="#16a2ec"/>
<rect x="775.70" y="284.4" width="8.1" height="47.0" fill="#16a2ec"/>
<rect x="785.90" y="284.7" width="8.1" height="46.7" fill="#16a2ec"/>
<rect x="796.10" y="284.9" width="8.1" height="46.5" fill="#16a2ec"/>
<rect x="806.30" y="284.7" width="8.1" height="46.7" fill="#16a2ec"/>
<rect x="816.50" y="284.2" width="8.1" height="47.2" fill="#16a2ec"/>
<rect x="826.70" y="284.3" width="8.1" height="47.1" fill="#16a2ec"/>
<rect x="836.90" y="284.1" width="8.1" height="47.3" fill="#16a2ec"/>
<rect x="847.10" y="284.0" width="8.1" height="47.4" fill="#16a2ec"/>
<rect x="857.30" y="284.1" width="8.1" height="47.3" fill="#16a2ec"/>
<rect x="867.50" y="284.2" width="8.1" height="47.2" fill="#16a2ec"/>
<rect x="877.70" y="284.0" width="8.1" height="47.4" fill="#16a2ec"/>
<rect x="887.90" y="284.3" width="8.1" height="47.1" fill="#16a2ec"/>
<rect x="898.10" y="283.5" width="8.1" height="47.9" fill="#1a7d1a"/>
<rect x="908.30" y="284.6" width="8.1" height="46.8" fill="#16a2ec"/>
<rect x="918.50" y="284.6" width="8.1" height="46.8" fill="#16a2ec"/>
<rect x="928.70" y="284.8" width="8.1" height="46.6" fill="#16a2ec"/>
<rect x="938.90" y="284.9" width="8.1" height="46.5" fill="#16a2ec"/>
<rect x="949.10" y="284.7" width="8.1" height="46.7" fill="#16a2ec"/>
<rect x="959.30" y="284.6" width="8.1" height="46.8" fill="#16a2ec"/>
<rect x="969.50" y="284.8" width="8.1" height="46.6" fill="#16a2ec"/>
<rect x="979.70" y="284.7" width="8.1" height="46.7" fill="#16a2ec"/>
<rect x="989.90" y="284.5" width="8.1" height="46.9" fill="#16a2ec"/>
<rect x="1000.10" y="284.4" width="8.1" height="47.0" fill="#16a2ec"/>
<rect x="1010.30" y="285.2" width="8.1" height="46.2" fill="#f21010"/>
<rect x="1020.50" y="284.6" width="8.1" height="46.8" fill="#16a2ec"/>
<rect x="1030.70" y="284.6" width="8.1" height="46.8" fill="#16a2ec"/>
<rect x="1040.90" y="284.4" width="8.1" height="47.0" fill="#16a2ec"/>
<rect x="1051.10" y="284.5" width="8.1" height="46.9" fill="#16a2ec"/>
<line x1="754.5" y1="331.4" x2="1060" y2="331.4" stroke="#333"/>
<text x="760.1" y="341" font-size="6.8" fill="#444" text-anchor="middle">#1</text>
<text x="780.4" y="341" font-size="6.8" fill="#444" text-anchor="middle">#3</text>
<text x="800.7" y="341" font-size="6.8" fill="#444" text-anchor="middle">#5</text>
<text x="821.0" y="341" font-size="6.8" fill="#444" text-anchor="middle">#7</text>
<text x="841.4" y="341" font-size="6.8" fill="#444" text-anchor="middle">#9</text>
<text x="861.7" y="341" font-size="6.8" fill="#444" text-anchor="middle">#11</text>
<text x="882.0" y="341" font-size="6.8" fill="#444" text-anchor="middle">#13</text>
<text x="902.3" y="341" font-size="6.8" fill="#444" text-anchor="middle">#15</text>
<text x="922.6" y="341" font-size="6.8" fill="#444" text-anchor="middle">#17</text>
<text x="943.0" y="341" font-size="6.8" fill="#444" text-anchor="middle">#19</text>
<text x="963.3" y="341" font-size="6.8" fill="#444" text-anchor="middle">#21</text>
<text x="983.6" y="341" font-size="6.8" fill="#444" text-anchor="middle">#23</text>
<text x="1003.9" y="341" font-size="6.8" fill="#444" text-anchor="middle">#25</text>
<text x="1024.2" y="341" font-size="6.8" fill="#444" text-anchor="middle">#27</text>
<text x="1044.6" y="341" font-size="6.8" fill="#444" text-anchor="middle">#29</text>
<circle cx="754.5" cy="284.5" r="2.2" fill="#7fd0f0"/><circle cx="1059" cy="284.5" r="2.2" fill="#7fd0f0"/>
<text x="1063" y="287.0" font-size="6.8" fill="#9ad6f0">12.39</text>
<line x1="754.5" y1="326.2" x2="1059" y2="326.2" stroke="#f5f080" stroke-dasharray="2,2" stroke-width="1"/>
<circle cx="754.5" cy="326.2" r="2.5" fill="#f0ee60"/><path d="M1057 323l5 3.2-5 3.2z" fill="#e0e050"/>
<text x="1063" y="328.5" font-size="6.8" fill="#ecec60">11.1</text>
<path d="M754.5 329.2l2.5 2.5-2.5 2.5-2.5-2.5z" fill="#a9a0e0"/>
<text x="1063" y="335" font-size="6.8" fill="#a9a0e0">9.914</text>
<rect x="1061.5" y="180.5" width="12" height="14.5" rx="1" fill="#3d86d4"/><path d="M1064 183h4.8l2.4 2.4v7.4h-7.2z" fill="#dfeaf7" stroke="#f4f8fd" stroke-width="0.8"/><path d="M1065 184.5h2.5v2h-2.5z" fill="#2a5a90"/><path d="M1065.5 190.5l1.5-2 1.5 1.5 1.5-2v3.5h-4.5z" fill="#6fa3dc"/>
<text x="550" y="354.5" font-size="7" fill="#222" text-anchor="middle" font-weight="bold">电池电流折线图</text>
<text x="550" y="367.5" font-size="7" fill="#aaa" text-anchor="middle">FXA 00:59:58</text>
<text x="386" y="370" font-size="6.8" fill="#555">y(A)</text>
<line x1="393.5" y1="379.5" x2="708.5" y2="379.5" stroke="#d9d9d9"/>
<text x="390" y="381.8" font-size="6.8" fill="#777" text-anchor="end">14</text>
<line x1="393.5" y1="396.0" x2="708.5" y2="396.0" stroke="#d9d9d9"/>
<text x="390" y="398.3" font-size="6.8" fill="#777" text-anchor="end">10</text>
<line x1="393.5" y1="416.7" x2="708.5" y2="416.7" stroke="#d9d9d9"/>
<text x="390" y="419.0" font-size="6.8" fill="#777" text-anchor="end">5</text>
<text x="390" y="439.6" font-size="6.8" fill="#777" text-anchor="end">0</text>
<line x1="393.5" y1="457.9" x2="708.5" y2="457.9" stroke="#d9d9d9"/>
<text x="390" y="460.2" font-size="6.8" fill="#777" text-anchor="end">-5</text>
<line x1="393.5" y1="478.6" x2="708.5" y2="478.6" stroke="#d9d9d9"/>
<text x="390" y="480.9" font-size="6.8" fill="#777" text-anchor="end">-10</text>
<line x1="393.5" y1="499.2" x2="708.5" y2="499.2" stroke="#d9d9d9"/>
<text x="390" y="501.6" font-size="6.8" fill="#777" text-anchor="end">-15</text>
<line x1="393.5" y1="378.5" x2="393.5" y2="499.2" stroke="#8a8a8a"/>
<line x1="393.5" y1="437.3" x2="708.5" y2="437.3" stroke="#333"/>
<line x1="395" y1="437.3" x2="395" y2="439.8" stroke="#333"/>
<line x1="431" y1="437.3" x2="431" y2="439.8" stroke="#333"/>
<line x1="468" y1="437.3" x2="468" y2="439.8" stroke="#333"/>
<line x1="505" y1="437.3" x2="505" y2="439.8" stroke="#333"/>
<line x1="542" y1="437.3" x2="542" y2="439.8" stroke="#333"/>
<line x1="578" y1="437.3" x2="578" y2="439.8" stroke="#333"/>
<line x1="616" y1="437.3" x2="616" y2="439.8" stroke="#333"/>
<line x1="653" y1="437.3" x2="653" y2="439.8" stroke="#333"/>
<line x1="690" y1="437.3" x2="690" y2="439.8" stroke="#333"/>
<text x="395" y="509.5" font-size="6.8" fill="#444" text-anchor="middle">00:00:00</text>
<text x="431" y="509.5" font-size="6.8" fill="#444" text-anchor="middle">00:03:58</text>
<text x="468" y="509.5" font-size="6.8" fill="#444" text-anchor="middle">00:11:28</text>
<text x="505" y="509.5" font-size="6.8" fill="#444" text-anchor="middle">00:18:58</text>
<text x="542" y="509.5" font-size="6.8" fill="#444" text-anchor="middle">00:26:28</text>
<text x="578" y="509.5" font-size="6.8" fill="#444" text-anchor="middle">00:33:58</text>
<text x="616" y="509.5" font-size="6.8" fill="#444" text-anchor="middle">00:41:28</text>
<text x="653" y="509.5" font-size="6.8" fill="#444" text-anchor="middle">00:48:58</text>
<text x="690" y="509.5" font-size="6.8" fill="#444" text-anchor="middle">00:56:28</text>
<polyline points="393.6,437 394.6,430 396.2,421.2 397,435 397.8,462.2 399.5,472 401.5,483 403.8,491.8 409,490.8 415.3,489.8 424.5,489.2 428,491 440,491.6 470,492 706.4,492 707.4,470 708.3,383" fill="none" stroke="#f2d43d" stroke-width="1.2" stroke-linejoin="round"/>
<text x="902" y="354.5" font-size="7" fill="#222" text-anchor="middle" font-weight="bold">单体电压折线图</text>
<text x="902" y="367.5" font-size="7" fill="#aaa" text-anchor="middle">FXA 00:59:58</text>
<text x="749" y="371" font-size="6.8" fill="#555">y(V)</text>
<line x1="756" y1="379.5" x2="1060" y2="379.5" stroke="#d9d9d9"/>
<text x="752" y="381.8" font-size="6.8" fill="#444" text-anchor="end">13.712</text>
<line x1="756" y1="395.2" x2="1060" y2="395.2" stroke="#d9d9d9"/>
<text x="752" y="397.5" font-size="6.8" fill="#444" text-anchor="end">13.5</text>
<line x1="756" y1="417.4" x2="1060" y2="417.4" stroke="#d9d9d9"/>
<text x="752" y="419.7" font-size="6.8" fill="#444" text-anchor="end">13.2</text>
<line x1="756" y1="439.6" x2="1060" y2="439.6" stroke="#d9d9d9"/>
<text x="752" y="441.9" font-size="6.8" fill="#444" text-anchor="end">12.9</text>
<line x1="756" y1="461.8" x2="1060" y2="461.8" stroke="#d9d9d9"/>
<text x="752" y="464.1" font-size="6.8" fill="#444" text-anchor="end">12.6</text>
<line x1="756" y1="484.0" x2="1060" y2="484.0" stroke="#d9d9d9"/>
<text x="752" y="486.3" font-size="6.8" fill="#444" text-anchor="end">12.3</text>
<text x="752" y="501.5" font-size="6.8" fill="#444" text-anchor="end">12.094</text>
<line x1="756" y1="378.5" x2="756" y2="499.2" stroke="#333"/>
<line x1="756" y1="499.2" x2="1060" y2="499.2" stroke="#555"/>
<text x="756" y="510" font-size="6.8" fill="#444" text-anchor="middle">00:00:00</text>
<text x="791.7" y="510" font-size="6.8" fill="#444" text-anchor="middle">00:03:58</text>
<text x="827" y="510" font-size="6.8" fill="#444" text-anchor="middle">00:11:28</text>
<text x="862" y="510" font-size="6.8" fill="#444" text-anchor="middle">00:18:58</text>
<text x="898" y="510" font-size="6.8" fill="#444" text-anchor="middle">00:26:28</text>
<text x="934" y="510" font-size="6.8" fill="#444" text-anchor="middle">00:33:58</text>
<text x="969" y="510" font-size="6.8" fill="#444" text-anchor="middle">00:41:28</text>
<text x="1006" y="510" font-size="6.8" fill="#444" text-anchor="middle">00:48:58</text>
<text x="1042" y="510" font-size="6.8" fill="#444" text-anchor="middle">00:56:28</text>
<polyline points="756,392 757.5,398 760,405 765,418 770,431 775,447 780,460 785,474 789,484 791.7,488.5 794,487 797,484 801,481.5 806,479.8 815,478.3 830,477.3 850,476.6 900,476 960,476 1000,476.3 1059,476.8" fill="none" stroke="#958e80" stroke-width="3.8" stroke-linejoin="round"/>
<polyline points="791.7,489.4 794,487.9 797,484.9 801,482.4 806,480.7 815,479.2 830,478.2 850,477.5 900,476.9 960,476.9 1000,477.2 1059,477.7" fill="none" stroke="#ab9482" stroke-width="2.6"/><polyline points="791.7,489.9 794,488.4 797,485.4 801,482.9 806,481.2 815,479.7 830,478.7 850,478.0 900,477.4 960,477.4 1000,477.7 1059,478.2" fill="none" stroke="#8f6248" stroke-width="1.1"/>
<line x1="390.5" y1="230.7" x2="393.5" y2="230.7" stroke="#555"/>
<line x1="390.5" y1="260.0" x2="393.5" y2="260.0" stroke="#555"/>
<line x1="390.5" y1="289.3" x2="393.5" y2="289.3" stroke="#555"/>
<line x1="390.5" y1="318.6" x2="393.5" y2="318.6" stroke="#555"/>
<line x1="751.5" y1="196.6" x2="754.5" y2="196.6" stroke="#555"/>
<line x1="751.5" y1="230.3" x2="754.5" y2="230.3" stroke="#555"/>
<line x1="751.5" y1="264.0" x2="754.5" y2="264.0" stroke="#555"/>
<line x1="751.5" y1="297.7" x2="754.5" y2="297.7" stroke="#555"/>
<line x1="751.5" y1="331.4" x2="754.5" y2="331.4" stroke="#555"/>
<line x1="390.5" y1="379.5" x2="393.5" y2="379.5" stroke="#888"/>
<line x1="390.5" y1="396.0" x2="393.5" y2="396.0" stroke="#888"/>
<line x1="390.5" y1="416.7" x2="393.5" y2="416.7" stroke="#888"/>
<line x1="390.5" y1="437.3" x2="393.5" y2="437.3" stroke="#888"/>
<line x1="390.5" y1="457.9" x2="393.5" y2="457.9" stroke="#888"/>
<line x1="390.5" y1="478.6" x2="393.5" y2="478.6" stroke="#888"/>
<line x1="390.5" y1="499.2" x2="393.5" y2="499.2" stroke="#888"/>
<line x1="753" y1="379.5" x2="756" y2="379.5" stroke="#666"/>
<line x1="753" y1="395.2" x2="756" y2="395.2" stroke="#666"/>
<line x1="753" y1="417.4" x2="756" y2="417.4" stroke="#666"/>
<line x1="753" y1="439.6" x2="756" y2="439.6" stroke="#666"/>
<line x1="753" y1="461.8" x2="756" y2="461.8" stroke="#666"/>
<line x1="753" y1="484.0" x2="756" y2="484.0" stroke="#666"/>
<line x1="753" y1="499.2" x2="756" y2="499.2" stroke="#666"/>
<rect x="387.5" y="529" width="673" height="6.8" fill="#cbc4ec"/>
<rect x="1060" y="528" width="8.5" height="8.5" fill="#fafafa" stroke="#cfcfcf" stroke-width="0.8"/>
</svg>

<!-- marquee -->
<div class="a" style="left:0;top:589px;width:1080px;height:16.5px;background:linear-gradient(#f3f4f8,#e3e6ee);border-top:1px solid #e6e8ee"></div>
<div class="t" style="left:-1.5px;top:597px;font-size:6.6px;color:#1a1a1a;letter-spacing:-0.1px">告警</div>
<div class="t" style="left:28px;top:597px;font-size:6.6px;color:#1a1a1a;letter-spacing:-0.1px">湖北省-武汉市-洪山区-大库油库网络机房通信电源UPS-LD-98T2019-12-27 20:36:21开始了告警数据告警</div>
<div class="a" style="left:351.5px;top:589.5px;width:12px;height:5.5px;background:#e8232f"></div>
<div class="t" style="left:352.5px;top:590px;font-size:4px;color:#fff">new</div>
<div class="t" style="left:352px;top:597px;font-size:6.6px;color:#1a1a1a;letter-spacing:-0.1px">湖北省-武汉市-洪山区-大库油库隔离室备用UPS-LD-98T2019-12-29 10:14:09开始了告警数据告警</div>
<div class="t" style="left:652px;top:597px;font-size:6.6px;color:#1a1a1a;letter-spacing:-0.1px">湖北省-武汉市-洪山区-大库油库配电室UPS-ZKT2019-12-27 14:56:56开始了单体电压低告警</div>
<div class="t" style="left:942px;top:597px;font-size:6.6px;color:#1a1a1a;letter-spacing:-0.1px">湖北省-武汉市-洪山区-大库油库配电室UPS-ZKT2019</div>
<!-- download bar -->
<div class="a" style="left:0;top:605.5px;width:1080px;height:23.5px;background:#fff"></div>
<div class="a" style="left:129px;top:607px;width:1px;height:22px;background:#e0e0e0"></div>
<div class="a" style="left:257px;top:607px;width:1px;height:22px;background:#e0e0e0"></div>
<div class="a" style="left:384.5px;top:607px;width:1px;height:22px;background:#e0e0e0"></div>
<svg class="a" style="left:12px;top:612px" width="10" height="12" viewBox="0 0 10 12"><path d="M2 .5h5l2.5 2.5v8.5h-7.5z" fill="#f4f8f4" stroke="#6a9a6a" stroke-width="0.8"/><rect x=".5" y="3.5" width="5" height="5" fill="#2f8a3e"/><path d="M1.7 4.5l2.6 3M4.3 4.5l-2.6 3" stroke="#fff" stroke-width="0.8"/></svg>
<div class="t" style="left:28px;top:616.5px;font-size:7.2px;color:#444">Echarts.xls</div>
<svg class="a" style="left:113px;top:616px" width="8" height="6" viewBox="0 0 8 6"><path d="M1 4.5l3-3 3 3" stroke="#666" stroke-width="1" fill="none"/></svg>
<svg class="a" style="left:139px;top:612px" width="10" height="12" viewBox="0 0 10 12"><path d="M2 .5h5l2.5 2.5v8.5h-7.5z" fill="#f4f8f4" stroke="#6a9a6a" stroke-width="0.8"/><rect x=".5" y="3.5" width="5" height="5" fill="#2f8a3e"/><path d="M1.7 4.5l2.6 3M4.3 4.5l-2.6 3" stroke="#fff" stroke-width="0.8"/></svg>
<div class="t" style="left:155px;top:616.5px;font-size:7.2px;color:#444">Echarts.xls</div>
<svg class="a" style="left:240px;top:616px" width="8" height="6" viewBox="0 0 8 6"><path d="M1 4.5l3-3 3 3" stroke="#666" stroke-width="1" fill="none"/></svg>
<svg class="a" style="left:267px;top:612px" width="10" height="12" viewBox="0 0 10 12"><path d="M2 .5h5l2.5 2.5v8.5h-7.5z" fill="#f4f8f4" stroke="#6a9a6a" stroke-width="0.8"/><rect x=".5" y="3.5" width="5" height="5" fill="#2f8a3e"/><path d="M1.7 4.5l2.6 3M4.3 4.5l-2.6 3" stroke="#fff" stroke-width="0.8"/></svg>
<div class="t" style="left:283px;top:616.5px;font-size:7.2px;color:#444">Echarts.xls</div>
<svg class="a" style="left:368px;top:616px" width="8" height="6" viewBox="0 0 8 6"><path d="M1 4.5l3-3 3 3" stroke="#666" stroke-width="1" fill="none"/></svg>
<div class="a" style="left:1014.5px;top:610.5px;width:43px;height:17.5px;border:1px solid #dadce0;border-radius:2px;background:#fff;box-shadow:0 1px 1px rgba(0,0,0,.08)"></div>
<div class="t" style="left:1014.5px;top:615.5px;width:43px;text-align:center;font-size:6.8px;color:#555">全部显示</div>
<svg class="a" style="left:1064px;top:614px" width="10" height="10" viewBox="0 0 10 10"><path d="M2 2l6 6M8 2l-6 6" stroke="#666" stroke-width="1"/></svg>

</body></html>
